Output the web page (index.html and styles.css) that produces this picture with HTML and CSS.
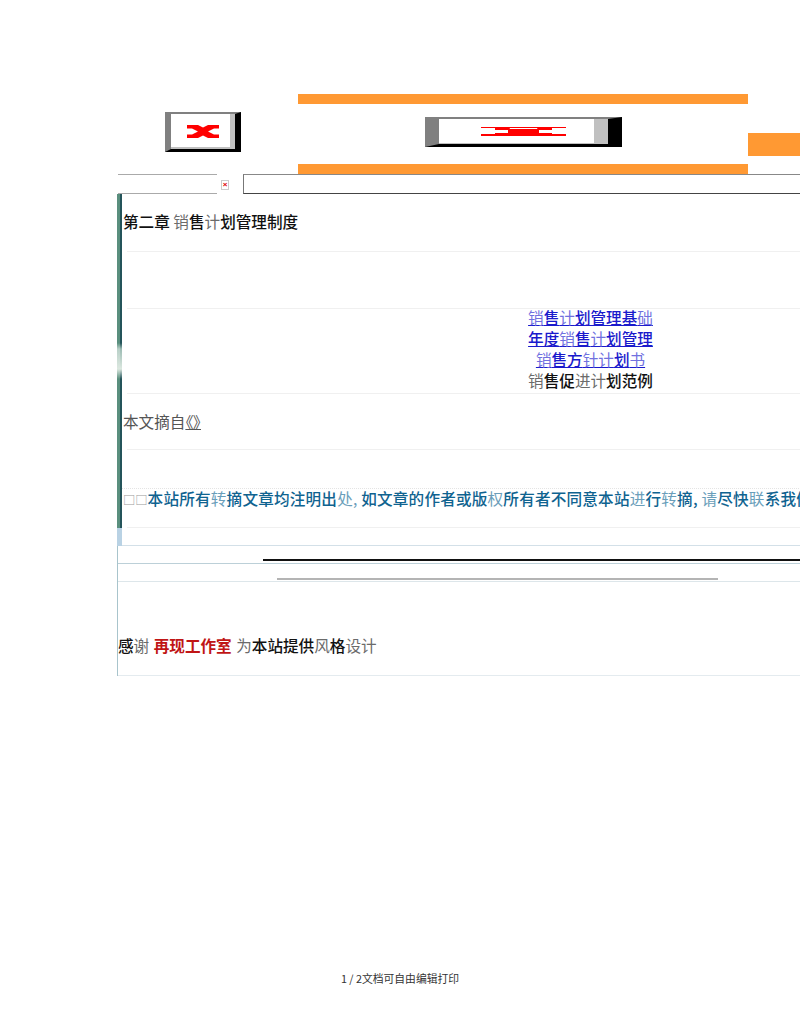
FILE: index.html
```html
<!DOCTYPE html>
<html lang="zh-CN">
<head>
  <meta charset="UTF-8" />
  <title>第二章 销售计划管理制度</title>
  <link rel="stylesheet" href="styles.css">
</head>
<body>
  <div class="page">
    <div class="header">
      <div class="logo-cell">
        <div class="broken broken-small">
          <svg width="32" height="13" viewBox="0 0 32 13"><path d="M0 0H11L16 2.5L21 0H32V3.5H27L21 6.5L27 9.5H32V13H21L16 10.5L11 13H0V9.5H5L11 6.5L5 3.5H0Z" fill="#f00"/></svg>
        </div>
      </div>
      <div class="banner-cell">
        <div class="broken broken-wide">
          <svg width="85" height="9" viewBox="0 0 85 9"><path d="M0 0H85V1H0ZM0 7H85V9H0ZM14 0H28L29 2H56L57 0H71V3H58V6H71V9H57L56 7.5H29L28 9H14V6H27V3H14Z" fill="#f00"/></svg>
        </div>
      </div>
      <div class="side-cell"><div class="side-bar"></div></div>
    </div>

    <div class="toolbar">
      <div class="tool-left"></div>
      <div class="tool-icon"><span class="tool-x">×</span></div>
      <div class="tool-right"></div>
    </div>

    <div class="content">
      <div class="strip"></div>
      <div class="rows">
        <div class="row row-title"><b>第二章</b> <span class="l">销</span><b>售</b><span class="l">计</span><b>划管理制度</b></div>
        <div class="row row-blank"></div>
        <div class="row row-links">
          <a href="#"><span class="l">销</span><b>售</b><span class="l">计</span><b>划管理基</b><span class="l">础</span></a>
          <a href="#"><b>年度</b><span class="l">销</span><b>售</b><span class="l">计</span><b>划管理</b></a>
          <a href="#"><span class="l">销</span><b>售方</b><span class="l">针计</span><b>划</b><span class="l">书</span></a>
          <span><span class="l">销</span><b>售促</b><span class="l">进计</span><b>划范例</b></span>
        </div>
        <div class="row row-source">本文摘自<a href="#">《》</a></div>
        <div class="row row-notice">
          <div class="notice-text"><span class="tofu">□□</span><b>本站所有</b><span class="l">转</span><b>摘文章均注明出</b><span class="l">处,</span> <b>如文章的作者或版</b><span class="l">权</span><b>所有者不同意本站</b><span class="l">进</span><b>行</b><span class="l">转</span><b>摘,</b> <span class="l">请</span><b>尽快</b><span class="l">联</span><b>系我们</b></div>
        </div>
        <div class="row row-end"></div>
      </div>
    </div>

    <div class="bottom">
      <div class="rule-row rule-a"><div class="rule-black"></div></div>
      <div class="rule-row rule-b"><div class="rule-gray"></div></div>
      <div class="credit"><b>感</b><span class="l">谢</span> <strong>再现工作室</strong> <span class="l">为</span><b>本站提供</b><span class="l">风</span><b>格</b><span class="l">设计</span></div>
    </div>
  </div>

  <div class="pager">1 / 2文档可自由编辑打印</div>
</body>
</html>
```

FILE: styles.css
```css
html, body {
  margin: 0;
  padding: 0;
}
body {
  width: 800px;
  height: 1036px;
  overflow: hidden;
  background: #fff;
  color: #111;
  font-family: "Noto Sans CJK SC", "Liberation Sans", sans-serif;
  font-size: 15.6px;
  line-height: 21px;
}
b {
  font-weight: 500;
}
.l {
  font-weight: 400;
  color: color-mix(in srgb, currentColor 62%, white);
}
.page {
  width: 1100px;
  padding: 94px 0 0 117px;
  box-sizing: border-box;
}

/* header */
.header {
  display: flex;
  height: 80px;
}
.logo-cell {
  width: 181px;
  padding: 18px 0 0 48px;
  box-sizing: border-box;
}
.banner-cell {
  width: 450px;
  box-sizing: border-box;
  padding: 13px 0 0 127px;
  border-top: 10px solid #ff9933;
  border-bottom: 10px solid #ff9933;
}
.side-cell {
  width: 52px;
  padding-top: 39px;
}
.side-bar {
  height: 23px;
  background: #ff9933;
}
.broken {
  display: flex;
  align-items: center;
  justify-content: center;
  box-sizing: border-box;
  background: #fff;
  border-style: solid;
  border-color: #808080 #000 #000 #808080;
}
.broken-small {
  width: 76px;
  height: 40px;
  border-width: 2px 6px 3px 6px;
  box-shadow: inset -5px -2px 0 #c0c0c0;
}
.broken-wide {
  width: 197px;
  height: 30px;
  border-width: 2px 14px 3px 14px;
  box-shadow: inset -14px -1px 0 #c0c0c0;
}

/* toolbar under the header */
.toolbar {
  display: flex;
  height: 20px;
  width: 683px;
}
.tool-left {
  width: 99px;
  margin-left: 1px;
  border-top: 1px solid #aaa;
  border-bottom: 1px solid #aaa;
  box-sizing: border-box;
}
.tool-icon {
  width: 26px;
  padding: 6px 0 0 4px;
  box-sizing: border-box;
}
.tool-x {
  display: block;
  width: 8px;
  height: 10px;
  border: 1px solid #ccc;
  box-sizing: border-box;
  color: #d00;
  font: bold 8px/8px "Liberation Sans", sans-serif;
  text-align: center;
}
.tool-right {
  flex: 1;
  border-top: 1px solid #888;
  border-left: 1px solid #777;
  border-bottom: 1px solid #444;
  box-sizing: border-box;
}

/* article rows */
.content {
  display: flex;
}
.strip {
  width: 5px;
  background:
    linear-gradient(to bottom, #24545a 0, #24545a 149px, #9dbcb4 155px, #dce8e0 175px, #24545a 185px, #24545a 334px, #b9d2e4 334px, #b9d2e4 100%) 3px 0 / 2px 100% no-repeat,
    linear-gradient(to bottom, #5a8f7e 0, #5a8f7e 149px, #b9d0c8 155px, #dce8e0 175px, #5a8f7e 185px, #5a8f7e 334px, #b9d2e4 334px, #b9d2e4 100%) 0 0 / 3px 100% no-repeat;
}
.rows {
  width: 937px;
}
.row {
  box-sizing: border-box;
  background: linear-gradient(#f0f0f0, #f0f0f0) 5px 100% / 100% 1px no-repeat;
}
.row-title {
  height: 58px;
  padding: 17px 0 0 1px;
}
.row-blank {
  height: 57px;
}
.row-links {
  height: 85px;
  display: flex;
  flex-direction: column;
  align-items: center;
}
.row-links > * {
  line-height: 17px;
  margin-bottom: 4px;
}
.row-links a {
  color: #1a1acc;
}
.row-source {
  height: 56px;
  padding: 17px 0 0 1px;
  color: #555;
}
.row-source a {
  color: #555;
  font-feature-settings: "palt";
}
.row-notice {
  height: 78px;
  padding-top: 38px;
  color: #0f6390;
  white-space: nowrap;
}
.notice-text {
  border-top: 1px dotted #e4e4e4;
  padding-left: 1px;
  line-height: 19px;
  letter-spacing: 0.2px;
}
.tofu {
  color: #999;
  font-weight: 400;
  font-size: 12.3px;
  letter-spacing: 0;
}
.row-end {
  height: 18px;
  background: none;
  border-bottom: 1px solid #d3e0e8;
}

/* lower rules and credit */
.bottom {
  width: 983px;
  border-left: 1px solid #a8c4cc;
}
.rule-row {
  box-sizing: border-box;
  height: 18px;
  border-bottom: 1px solid #bcd0d8;
}
.rule-a {
  padding: 13px 0 0 145px;
}
.rule-b {
  padding: 14px 0 0 159px;
  border-bottom-color: #dde6ea;
}
.rule-black {
  height: 2px;
  background: #111;
}
.rule-gray {
  width: 441px;
  height: 2px;
  background: #b4b4b4;
}
.credit {
  box-sizing: border-box;
  height: 94px;
  padding-top: 53px;
  word-spacing: 1px;
  border-bottom: 1px solid #e4ebef;
  background: linear-gradient(#c4d5de, #c4d5de) 565px 100% / 100% 1px no-repeat;
  background-origin: border-box;
}
.credit strong {
  color: #c01515;
  font-weight: 700;
}

.pager {
  margin-top: 294px;
  text-align: center;
  font-size: 10.8px;
  line-height: 16px;
  color: #333;
}
```
